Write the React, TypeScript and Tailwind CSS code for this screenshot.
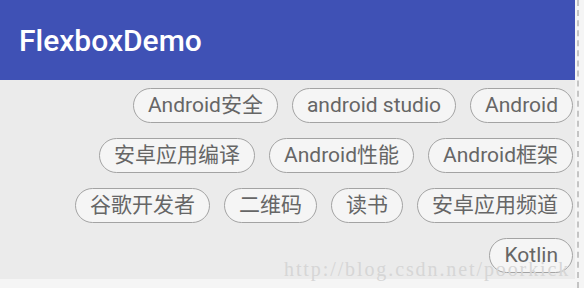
const tags = [
  "Android安全",
  "android studio",
  "Android",
  "安卓应用编译",
  "Android性能",
  "Android框架",
  "谷歌开发者",
  "二维码",
  "读书",
  "安卓应用频道",
  "Kotlin",
];

const font = { fontFamily: '"Roboto", "Noto Sans CJK SC", sans-serif' };

export default function App() {
  return (
    <div className="relative flex h-[288px] w-[584px] overflow-hidden bg-[#f5f5f5]" style={font}>
      <div className="flex w-[575px] flex-col">
        <div className="flex h-[80px] items-center bg-[#3f51b5] pl-[19px]">
          <span className="text-[30px] font-medium text-white">FlexboxDemo</span>
        </div>
        <div className="flex h-[199px] flex-wrap content-start justify-end gap-x-[14px] gap-y-[15px] bg-[#ebebeb] pr-[2px] pt-[8px]">
          {tags.map((t) => (
            <div
              key={t}
              className="flex h-[35px] items-center rounded-full border border-[#a3a3a3] bg-[#f5f5f5] px-[14px] text-[21px] leading-none text-[#666666]"
            >
              {t}
            </div>
          ))}
        </div>
      </div>
      <div className="w-[9px] pl-[2px]">
        <div className="h-full border-l-2 border-dashed border-[#c4c4c4]" />
      </div>
      <div
        className="pointer-events-none absolute left-[284px] top-[254px] text-[20px] tracking-[1.9px] text-[#d6d6d6]"
        style={{ fontFamily: '"Liberation Serif", serif' }}
      >
        http://blog.csdn.net/poorkick
      </div>
    </div>
  );
}
